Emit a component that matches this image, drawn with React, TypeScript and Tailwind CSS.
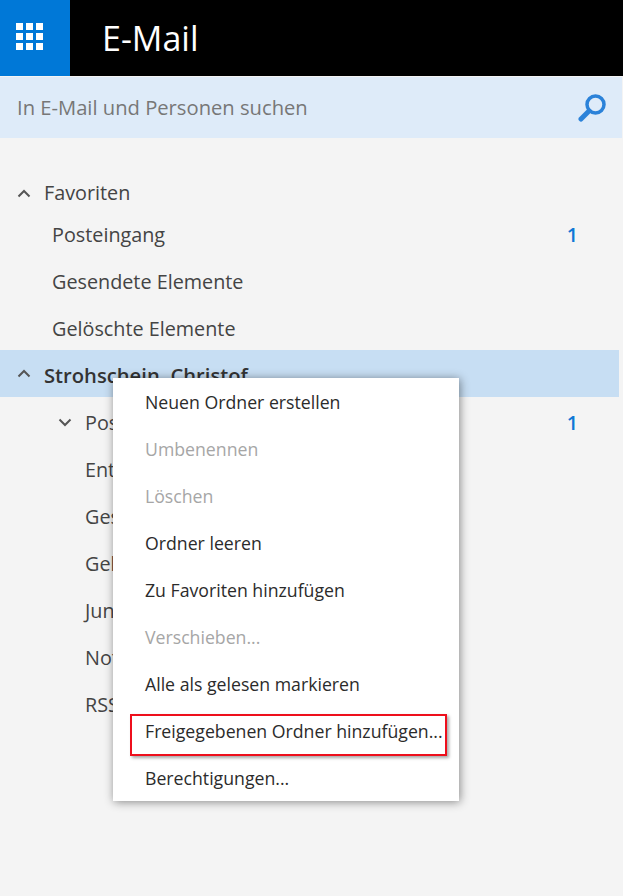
const font = "font-['Open_Sans',sans-serif]";

function Chevron({ down = false }: { down?: boolean }) {
  return (
    <svg width="14" height="9" viewBox="0 0 14 9" fill="none" className={down ? "rotate-180" : ""}>
      <path d="M1.5 7.5 7 2l5.5 5.5" stroke="#555" strokeWidth="2" />
    </svg>
  );
}

function FolderRow({ label, count }: { label: string; count?: string }) {
  return (
    <div className="flex h-[47px] items-center pt-[4px] pr-[45px] pl-[85px]">
      <span className="flex-1 whitespace-nowrap">{label}</span>
      {count && <span className="font-semibold text-[#0f78d6]">{count}</span>}
    </div>
  );
}

function FavRow({ label, count }: { label: string; count?: string }) {
  return (
    <div className="flex h-[47px] items-center pt-[5px] pr-[45px] pl-[52px]">
      <span className="flex-1">{label}</span>
      {count && <span className="font-semibold text-[#0f78d6]">{count}</span>}
    </div>
  );
}

function MenuItem({ label, disabled }: { label: string; disabled?: boolean }) {
  return (
    <div className={`flex h-[47px] items-center pt-[1px] pl-8 ${disabled ? "text-[#a6a6a6]" : "text-[#2b2b2b]"}`}>
      {label}
    </div>
  );
}

export default function App() {
  return (
    <div className={`${font} relative h-[896px] w-[623px] overflow-hidden bg-[#f4f4f4] text-[19.8px] text-[#444]`}>
      <header className="flex h-[76px] bg-black">
        <div className="flex w-[70px] items-center bg-[#0078d7] pb-[3px] pl-[16px]">
          <div className="grid grid-cols-3 gap-[3px]">
            {Array.from({ length: 9 }).map((_, i) => (
              <div key={i} className="size-[7px] bg-white" />
            ))}
          </div>
        </div>
        <div className="flex items-center pl-8 text-[34px] text-white">E-Mail</div>
      </header>
      <div className="mt-px mr-px flex h-[61px] items-center justify-between bg-[#deebf9] pr-[15px] pl-[17px] text-[20.2px] text-[#777]">
        <span>In E-Mail und Personen suchen</span>
        <svg width="29" height="29" viewBox="0 0 29 29" fill="none">
          <circle cx="17.5" cy="11.5" r="8.5" stroke="#2b82d9" strokeWidth="3.5" />
          <path d="M11 18 3 26" stroke="#2b82d9" strokeWidth="5" strokeLinecap="round" />
        </svg>
      </div>

      <nav className="mt-[34px]">
        <div className="flex h-[37px] items-center gap-[13px] pt-[5px] pl-[17px]">
          <Chevron />
          <span>Favoriten</span>
        </div>
        <FavRow label="Posteingang" count="1" />
        <FavRow label="Gesendete Elemente" />
        <FavRow label="Gelöschte Elemente" />
        <div className="flex h-[47px] w-[619px] items-center gap-[13px] bg-[#c7def3] pl-[17px] text-[20.2px]">
          <Chevron />
          <span className="pt-[4px] font-semibold text-[#333]">Strohschein, Christof</span>
        </div>
        <div className="flex h-[47px] items-center pt-[3px] pr-[45px] pl-[58px]">
          <Chevron down />
          <span className="ml-[13px] flex-1 pt-[1px]">Posteingang</span>
          <span className="pt-[1px] font-semibold text-[#0f78d6]">1</span>
        </div>
        <FolderRow label="Entwürfe" />
        <FolderRow label="Gesendete Elemente" />
        <FolderRow label="Gelöschte Elemente" />
        <FolderRow label="Junk-E-Mail" />
        <FolderRow label="Notizen" />
        <FolderRow label="RSS-Feeds" />
      </nav>

      <div className="absolute top-[378px] left-[113px] w-[346px] bg-white text-[17.7px] shadow-[1px_1px_9px_rgba(0,0,0,0.45)]">
        <MenuItem label="Neuen Ordner erstellen" />
        <MenuItem label="Umbenennen" disabled />
        <MenuItem label="Löschen" disabled />
        <MenuItem label="Ordner leeren" />
        <MenuItem label="Zu Favoriten hinzufügen" />
        <MenuItem label="Verschieben..." disabled />
        <MenuItem label="Alle als gelesen markieren" />
        <MenuItem label="Freigegebenen Ordner hinzufügen..." />
        <MenuItem label="Berechtigungen..." />
      </div>
      <div className="absolute top-[714px] left-[130px] h-[42px] w-[317px] border-2 border-[#ee0f1c] shadow-[2px_2px_3px_rgba(0,0,0,0.35)]" />
    </div>
  );
}
